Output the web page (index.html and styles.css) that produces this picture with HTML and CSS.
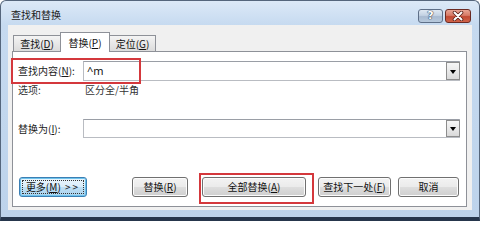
FILE: index.html
```html
<!DOCTYPE html>
<html lang="zh-CN">
<head>
<meta charset="utf-8">
<title>查找和替换</title>
<link rel="stylesheet" href="styles.css">
</head>
<body>
<div class="window">
  <div class="titlebar">
    <span class="title">查找和替换</span>
    <div class="caption-btns">
      <span class="cap help">?</span>
      <span class="cap close">
        <svg width="12" height="10" viewBox="0 0 12 10">
          <path d="M2.5 1.5 L9.5 8.5 M9.5 1.5 L2.5 8.5" stroke="#5a2018" stroke-width="3.6" stroke-linecap="round"/>
          <path d="M2.5 1.5 L9.5 8.5 M9.5 1.5 L2.5 8.5" stroke="#ffffff" stroke-width="2" stroke-linecap="round"/>
        </svg>
      </span>
    </div>
  </div>
  <div class="client">
    <div class="tabs">
      <div class="tab t1">查找(<u>D</u>)</div>
      <div class="tab t2 active">替换(<u>P</u>)</div>
      <div class="tab t3">定位(<u>G</u>)</div>
    </div>
    <div class="panel">
      <div class="row find-row">
        <label class="lbl">查找内容(<u>N</u>):</label>
        <div class="combo">
          <span class="combo-text">^m</span>
          <span class="drop"><span class="arrow"></span></span>
        </div>
      </div>
      <div class="row opt-row">
        <span class="lbl opt-lbl">选项:</span>
        <span class="opt-val">区分全/半角</span>
      </div>
      <div class="row repl-row">
        <label class="lbl">替换为(<u>I</u>):</label>
        <div class="combo combo-sm">
          <span class="combo-text"></span>
          <span class="drop"><span class="arrow"></span></span>
        </div>
      </div>
      <div class="row btn-row">
        <button class="btn more"><span class="focus">更多(<u>M</u>)&nbsp;<span class="gt">&gt;&gt;</span></span></button>
        <button class="btn b-repl">替换(<u>R</u>)</button>
        <button class="btn b-all">全部替换(<u>A</u>)</button>
        <button class="btn b-next">查找下一处(<u>F</u>)</button>
        <button class="btn b-cancel">取消</button>
      </div>
    </div>
  </div>
  <div class="mark mark-find"></div>
  <div class="mark mark-all"></div>
</div>
</body>
</html>
```
FILE: styles.css
```css
* { box-sizing: border-box; }
html, body { margin: 0; padding: 0; }
body {
  width: 480px;
  height: 221px;
  overflow: hidden;
  background: #ffffff;
  font-family: "Noto Sans CJK SC", "Microsoft YaHei", sans-serif;
  font-size: 10px;
  color: #111;
}
u { text-decoration: underline; text-underline-offset: 1px; }

.window {
  position: relative;
  width: 480px;
  height: 221px;
  border: 1px solid #55667c;
  border-bottom: 4px solid #26364c;
  border-radius: 6px 6px 0 0;
  background: linear-gradient(to bottom, #dce9f7 0px, #c6daf0 24px, #bdd3eb 100%);
  padding: 0 7px;
  display: flex;
  flex-direction: column;
}

.titlebar {
  height: 24px;
  display: flex;
  justify-content: space-between;
  align-items: flex-start;
}
.title {
  margin-top: 7px;
  margin-left: 3px;
  line-height: 14px;
  font-size: 10px;
  color: #1a1a1a;
}
.caption-btns {
  display: flex;
  margin-top: 8px;
  margin-right: 1px;
  gap: 2px;
}
.cap {
  height: 14px;
  border: 1px solid #5e6f88;
  border-radius: 3px;
  display: flex;
  align-items: center;
  justify-content: center;
}
.help {
  width: 25px;
  background: linear-gradient(to bottom, #dfe8f2 0%, #c3d2e3 45%, #a9bbd1 55%, #b7c9dd 100%);
  color: #ffffff;
  font-family: "DejaVu Sans", sans-serif;
  font-weight: bold;
  font-size: 11px;
  line-height: 12px;
  text-shadow: 0 0 1px #2e3d55, 0 0 1px #2e3d55, 0 0 1px #2e3d55;
}
.close {
  width: 26px;
  border-color: #6b2a22;
  background: linear-gradient(to bottom, #e8a494 0%, #d77a66 45%, #c24a33 55%, #d0634a 100%);
}

.client {
  height: 185px;
  background: #f0f0f0;
  padding-top: 7px;
  display: flex;
  flex-direction: column;
}

.tabs {
  height: 20px;
  margin-left: 5px;
  margin-bottom: -1px;
  display: flex;
  align-items: flex-end;
}
.tab {
  height: 17px;
  line-height: 16px;
  text-align: center;
  border: 1px solid #8e9198;
  border-bottom: none;
  background: linear-gradient(to bottom, #f4f4f4 0%, #e7e7e7 50%, #dadada 100%);
  color: #111;
}
.t1 { width: 47px; border-right: none; }
.t3 { width: 46px; border-left: none; }
.tab.active {
  position: relative;
  z-index: 1;
  width: 50px;
  height: 20px;
  line-height: 19px;
  background: #ffffff;
}

.panel {
  margin: 0 5px 3px 4px;
  height: 156px;
  border: 1px solid #8e9198;
  background: #ffffff;
  padding: 9px 0 9px 0;
  display: flex;
  flex-direction: column;
}
.row { display: flex; align-items: center; }
.lbl {
  width: 70px;
  padding-left: 5px;
  line-height: 12px;
  color: #1a1a1a;
  flex-shrink: 0;
}
.find-row { height: 20px; }
.opt-row { height: 12px; margin-top: 3px; }
.opt-lbl { width: 72px; color: #333; }
.opt-val { line-height: 12px; color: #333; }
.repl-row { height: 19px; margin-top: 23px; }

.combo {
  flex: 1;
  height: 20px;
  margin-right: 6px;
  border: 1px solid #b9bcc2;
  border-top-color: #9a9ea6;
  background: #ffffff;
  display: flex;
  align-items: center;
  justify-content: space-between;
}
.combo-sm { height: 19px; }
.combo-text {
  padding-left: 3px;
  font-family: "Noto Sans", "DejaVu Sans", sans-serif;
  font-size: 11px;
  line-height: 14px;
  color: #111;
}
.drop {
  width: 14px;
  height: 100%;
  border: 1px solid #8d8d8d;
  margin-right: -1px;
  background: linear-gradient(to bottom, #f6f6f6 0%, #e9e9e9 50%, #d9d9d9 100%);
  display: flex;
  align-items: center;
  justify-content: center;
}
.combo-sm .drop { height: 17px; }
.arrow {
  width: 0;
  height: 0;
  border-left: 3px solid transparent;
  border-right: 3px solid transparent;
  border-top: 4px solid #000;
  margin-top: 1px;
}

.btn-row {
  height: 20px;
  margin-top: 39px;
  padding-left: 6px;
}
.btn {
  height: 20px;
  padding: 0;
  font-family: inherit;
  font-size: 10px;
  line-height: 16px;
  color: #111;
  border: 1px solid #707070;
  border-radius: 3px;
  background: linear-gradient(to bottom, #f3f3f3 0%, #ebebeb 48%, #dddddd 52%, #cfcfcf 100%);
  box-shadow: inset 0 0 0 1px #fcfcfc;
  display: flex;
  align-items: center;
  justify-content: center;
}
.more {
  width: 68px;
  border-color: #3b7fb4;
  background: linear-gradient(to bottom, #eaf5fc 0%, #d9edfa 48%, #bfdff4 52%, #a9d3ee 100%);
  box-shadow: inset 0 0 0 1px #6fc3ec;
}
.more .focus {
  width: 62px;
  height: 14px;
  border: 1px dotted #333;
  line-height: 12px;
  display: flex;
  align-items: center;
  justify-content: center;
}
.gt { letter-spacing: 2px; margin-left: 2px; }
.b-repl { width: 56px; margin-left: 45px; }
.b-all { width: 104px; margin-left: 14px; }
.b-next { width: 73px; margin-left: 12px; }
.b-cancel { width: 61px; margin-left: 7px; }

.mark {
  position: absolute;
  border: 2px solid #d4383c;
}
.mark-find { left: 10px; top: 57px; width: 130px; height: 26px; }
.mark-all { left: 198px; top: 172px; width: 115px; height: 31px; }
```
